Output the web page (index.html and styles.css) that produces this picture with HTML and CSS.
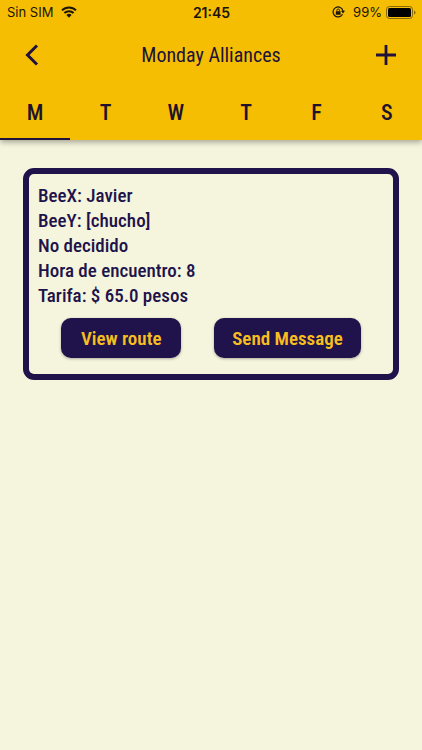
FILE: index.html
```html
<!DOCTYPE html>
<html lang="es">
<head>
<meta charset="utf-8">
<meta name="viewport" content="width=device-width, initial-scale=1">
<title>Monday Alliances</title>
<link rel="stylesheet" href="styles.css">
</head>
<body>
<header class="app-header">
  <div class="status-bar">
    <div class="status-group">
      <span>Sin SIM</span>
      <svg class="wifi" viewBox="0 0 16 12" aria-hidden="true">
        <path d="M1 4.4a10 10 0 0 1 14 0M3.400 7a6.600 6.600 0 0 1 9.200 0" fill="none" stroke="currentColor" stroke-width="2"/>
        <path d="M5.400 9a3.800 3.800 0 0 1 5.200 0L8 11.700z" fill="currentColor"/>
      </svg>
    </div>
    <time class="clock">21:45</time>
    <div class="status-group status-end">
      <svg class="lock" viewBox="0 0 13 12" aria-hidden="true">
        <path d="M10.500 8.300A5 5 0 1 1 11 5" fill="none" stroke="currentColor" stroke-width="1.200"/>
        <path d="M9 4.800h4L11 7.600z" fill="currentColor"/>
        <rect x="3.800" y="5.200" width="4.800" height="3.600" rx=".4" fill="currentColor"/>
        <path d="M4.900 5.400V4.300a1.300 1.300 0 0 1 2.600 0v1.100" fill="none" stroke="currentColor" stroke-width=".9"/>
      </svg>
      <span>99%</span>
      <svg class="battery" viewBox="0 0 30 13" aria-hidden="true">
        <rect x=".5" y=".5" width="26" height="12" rx="3" fill="none" stroke="currentColor" stroke-opacity=".5"/>
        <rect x="2" y="2" width="23" height="9" rx="1.500" fill="#000"/>
        <path d="M28 4.500q1.500.5 1.500 2t-1.500 2z" fill="currentColor" fill-opacity=".5"/>
      </svg>
    </div>
  </div>
  <div class="toolbar">
    <button class="icon-button" type="button" aria-label="Back">
      <svg viewBox="0 0 24 24" aria-hidden="true"><path d="M17 2.500 7.500 12l9.500 9.500" fill="none" stroke="currentColor" stroke-width="3"/></svg>
    </button>
    <h1 class="title">Monday Alliances</h1>
    <button class="icon-button icon-button-end" type="button" aria-label="Add">
      <svg viewBox="0 0 24 24" aria-hidden="true"><path d="M12 2v20M2 12h20" fill="none" stroke="currentColor" stroke-width="2.800"/></svg>
    </button>
  </div>
  <nav class="tabs" aria-label="Days">
    <button class="tab tab-active" type="button" aria-current="true">M</button>
    <button class="tab" type="button">T</button>
    <button class="tab" type="button">W</button>
    <button class="tab" type="button">T</button>
    <button class="tab" type="button">F</button>
    <button class="tab" type="button">S</button>
  </nav>
</header>
<main class="content">
  <article class="card">
    <p>BeeX: Javier</p>
    <p>BeeY: [chucho]</p>
    <p>No decidido</p>
    <p>Hora de encuentro: 8</p>
    <p>Tarifa: $ 65.0 pesos</p>
    <div class="actions">
      <button class="action" type="button">View route</button>
      <button class="action" type="button">Send Message</button>
    </div>
  </article>
</main>
</body>
</html>
```
FILE: styles.css
```css
* { box-sizing: border-box; }

body {
  margin: 0;
  min-height: 100vh;
  background: #f5f4dd;
  color: #20124a;
  font-family: "Ubuntu Condensed", "Roboto Condensed", "Liberation Sans Narrow", sans-serif;
}

button {
  margin: 0;
  padding: 0;
  border: 0;
  background: none;
  color: inherit;
  font: inherit;
  cursor: pointer;
}

svg { display: block; }
h1, p { margin: 0; }

.app-header {
  background: #f6be02;
  box-shadow: 0 2px 6px rgba(0, 0, 0, .35);
}

.status-bar {
  display: grid;
  grid-template-columns: 1fr auto 1fr;
  align-items: center;
  height: 24px;
  padding: 0 6px 0 7px;
  color: #1c1405;
  font-family: Inter, sans-serif;
  font-size: 13px;
}

.status-group { display: flex; align-items: center; gap: 8px; }
.status-end { justify-content: flex-end; gap: 4px; }
.clock { font-size: 14px; font-weight: 600; }
.wifi { width: 16px; height: 12px; }
.lock { width: 13px; height: 12px; margin-right: 4px; }
.battery { width: 30px; height: 13px; }

.toolbar {
  display: grid;
  grid-template-columns: 1fr auto 1fr;
  align-items: center;
  height: 61px;
  padding: 0 8px;
  color: #20123a;
}

.icon-button { display: grid; place-items: center; width: 48px; height: 48px; }
.icon-button-end { justify-self: end; width: 56px; }
.icon-button svg { width: 24px; height: 24px; }
.title { font-size: 20px; font-weight: 400; }

.tabs { display: flex; color: #20122c; }

.tab {
  flex: 1;
  height: 55px;
  padding-top: 2px;
  border-bottom: 2px solid transparent;
  font-size: 22px;
  font-weight: 500;
}

.tab-active { border-bottom-color: #20123a; }

.content { padding: 28px 23px; }

.card {
  padding: 9px 9px 16px;
  border: 6px solid #20124a;
  border-radius: 11px;
  font-size: 19px;
  font-weight: 500;
  line-height: 25px;
}

.actions { display: flex; justify-content: center; gap: 33px; margin-top: 10px; }

.action {
  min-width: 120px;
  height: 40px;
  padding: 0 18px;
  border-radius: 10px;
  background: #20124a;
  box-shadow: 0 1px 3px rgba(0, 0, 0, .3);
  color: #f6be20;
  font-weight: 600;
}
```
